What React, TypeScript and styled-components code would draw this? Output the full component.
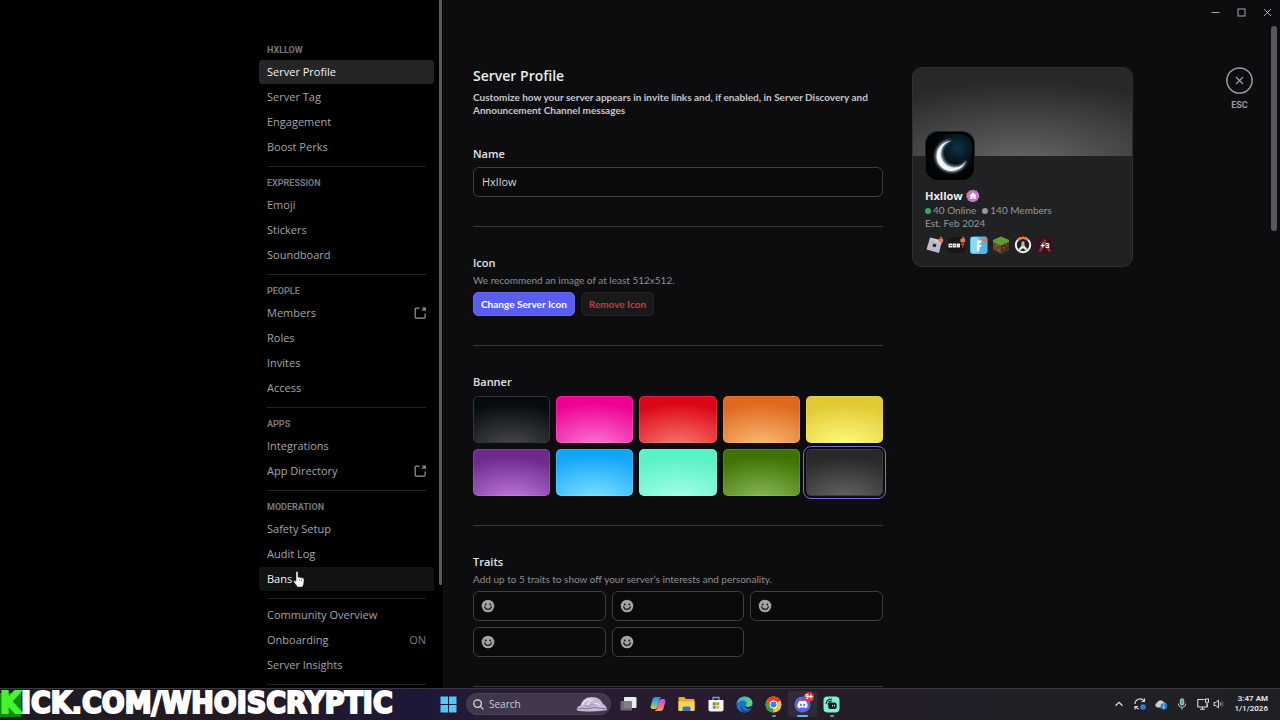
import React, { useState } from "react";
import styled, { createGlobalStyle, css } from "styled-components";
import { FaDiscord } from "react-icons/fa";

const uiFont = `"Open Sans", "Noto Sans", sans-serif`;
const smallFont = `Lato, Roboto, sans-serif`;

const GlobalStyle = createGlobalStyle`
  * { box-sizing: border-box; }
  body { margin: 0; background: #000; color: #dcdde0; font-family: ${uiFont}; }
  button, input { font: inherit; color: inherit; }
  h1, h2, h3, p, ul { margin: 0; padding: 0; }
`;

const Desktop = styled.div`
  position: relative;
  display: flex;
  flex-direction: column;
  height: 100vh;
  overflow: hidden;
`;

const Window = styled.div`
  flex: 1;
  min-height: 0;
  display: grid;
  grid-template-columns: minmax(200px, 443fr) minmax(0, 837fr);
  overflow: hidden;
`;

/* ---------- sidebar ---------- */

const Sidebar = styled.aside`
  display: flex;
  justify-content: flex-end;
  min-height: 0;
  padding-right: 1px;
  background: #000;
`;

const Nav = styled.nav`
  width: 175px;
  margin-right: 5px;
  padding-top: 38px;
`;

const Track = styled.div`
  width: 3px;
  height: 100%;
`;

const SideThumb = styled.div`
  height: 85%;
  border-radius: 0 0 2px 2px;
  background: #5b5b5e;
`;

const NavHeading = styled.h2`
  padding: 5px 8px 0;
  margin-bottom: 3px;
  font: 700 9px/14px Roboto, sans-serif;
  color: #77777d;
`;

const NavList = styled.ul`
  display: flex;
  flex-direction: column;
  gap: 1px;
  list-style: none;
`;

const NavRow = styled.li`
  position: relative;
`;

const NavLink = styled.a<{ $state?: "selected" | "hover" }>`
  display: flex;
  align-items: center;
  justify-content: space-between;
  height: 24px;
  padding: 0 8px;
  border-radius: 3px;
  font-size: 11px;
  font-weight: 500;
  line-height: 16px;
  color: #a4a4aa;
  text-decoration: none;
  ${p => p.$state === "selected" && css`background: #252527; color: #f2f2f4;`}
  ${p => p.$state === "hover" && css`background: #121213; color: #f2f2f4;`}
`;

const NavBadge = styled.span`
  color: #7c7c82;
`;

const NavRule = styled.hr`
  height: 1px;
  margin: 7px 8px 4px;
  border: 0;
  background: #232325;
`;

const Pointer = styled.svg`
  position: absolute;
  left: 34px;
  top: 4px;
  width: 12px;
  height: 17px;
`;

/* ---------- main pane ---------- */

const Pane = styled.main`
  display: flex;
  flex-direction: column;
  min-height: 0;
  background: #0d0d0f;
`;

const TitleBar = styled.div`
  display: flex;
  flex: none;
  justify-content: flex-end;
  height: 24px;
`;

const WindowButton = styled.button`
  display: flex;
  align-items: center;
  justify-content: center;
  width: 26px;
  padding: 0;
  border: 0;
  background: none;
  color: #a5a5aa;
`;

const PaneBody = styled.div`
  flex: 1;
  display: flex;
  min-height: 0;
  padding-right: 3px;
`;

const PageScroll = styled.div`
  width: 6px;
  padding-top: 2px;
`;

const PageThumb = styled.div`
  height: 31%;
  border-radius: 3px;
  background: #58585e;
`;

const Content = styled.div`
  flex: 1;
  display: flex;
  align-items: flex-start;
  min-width: 0;
  padding: 43px 18px 0 30px;
`;

const Form = styled.form`
  flex: 1;
  min-width: 0;
`;

const Title = styled.h1`
  font-size: 14px;
  font-weight: 600;
  line-height: 18px;
  color: #ebebee;
`;

const Intro = styled.p`
  margin: 6px 0 29px;
  font: 700 10px/13px ${smallFont};
  color: #c6c6ca;
`;

const Section = styled.section`
  padding-bottom: 29px;
  margin-bottom: 28px;
  border-bottom: 1px solid #39393c;
`;

const Label = styled.h3`
  font-size: 11px;
  font-weight: 600;
  line-height: 16px;
  color: #e2e2e5;
`;

const Hint = styled.p`
  margin: 2px 0 5px;
  font: 400 10px/14px ${smallFont};
  color: #8d8d93;
`;

const boxed = css`
  height: 30px;
  border: 1px solid #3e3e41;
  border-radius: 6px;
  background: #0a0a0a;
`;

const NameInput = styled.input`
  ${boxed}
  display: block;
  width: 100%;
  margin-top: 5px;
  padding: 0 8px 1px;
  font-size: 11px;
  color: #d8d8dc;
`;

const ButtonRow = styled.div`
  display: flex;
  gap: 6px;
`;

const Button = styled.button<{ $danger?: boolean }>`
  height: 24px;
  padding: 0 7px;
  border: 1px solid ${p => (p.$danger ? "#232325" : "#6468f2")};
  border-radius: 5px;
  background: ${p => (p.$danger ? "#19191b" : "#595ef0")};
  color: ${p => (p.$danger ? "#c43c45" : "#fff")};
  font: 700 10px/14px ${smallFont};
`;

const Swatches = styled.div`
  display: grid;
  grid-template-columns: repeat(5, 1fr);
  gap: 6px;
  margin-top: 6px;
`;

const Swatch = styled.input<{ $base: string; $glow: string; $edge?: string }>`
  appearance: none;
  width: 100%;
  height: 47px;
  margin: 0;
  border: 1px solid ${p => p.$edge ?? "rgba(255, 255, 255, 0.12)"};
  border-radius: 5px;
  background: radial-gradient(ellipse 95% 95% at 50% 110%, ${p => p.$glow}, ${p => p.$base}) border-box;
  &:checked {
    outline: 1px solid #7473d8;
    outline-offset: 2px;
  }
`;

const Traits = styled.div`
  display: grid;
  grid-template-columns: repeat(3, minmax(0, 1fr));
  gap: 6px;
`;

const Trait = styled.div`
  ${boxed}
  display: flex;
  align-items: center;
  gap: 6px;
  padding: 0 7px;
`;

const EmojiButton = styled.button`
  display: flex;
  padding: 0;
  border: 0;
  background: none;
`;

const TraitInput = styled.input`
  flex: 1;
  min-width: 0;
  padding: 0;
  border: 0;
  outline: 0;
  background: none;
  font-size: 11px;
`;

/* ---------- server card ---------- */

const Card = styled.article`
  flex: none;
  width: 221px;
  margin-left: 29px;
  overflow: hidden;
  border: 1px solid #2f3031;
  border-radius: 10px;
  background: #202123;
`;

const CardBanner = styled.div`
  height: 88px;
  background: radial-gradient(ellipse 95% 95% at 50% 110%, #676767, #282828);
`;

const CardBody = styled.div`
  padding: 0 12px 12px;
`;

const Avatar = styled.svg`
  display: block;
  width: 50px;
  height: 50px;
  margin-top: -25px;
`;

const CardName = styled.h2`
  display: flex;
  align-items: center;
  gap: 3px;
  margin-top: 7px;
  font-size: 11px;
  font-weight: 700;
  line-height: 16px;
  color: #ebebee;
`;

const CardLine = styled.p`
  display: flex;
  align-items: center;
  font: 400 10px/13px ${smallFont};
  color: #96979c;
`;

const Dot = styled.span<{ $color: string }>`
  width: 6px;
  height: 6px;
  margin-right: 2px;
  border-radius: 50%;
  background: ${p => p.$color};
  * + & { margin-left: 6px; }
`;

const Games = styled.div`
  display: flex;
  gap: 2px;
  margin-top: 6px;
  svg { display: block; width: 20px; height: 18px; }
`;

const CloseBox = styled.button`
  display: flex;
  flex-direction: column;
  align-items: center;
  gap: 5px;
  width: 27px;
  margin-left: 93px;
  padding: 0;
  border: 0;
  background: none;
  color: #9b9ba0;
  font: 700 9px/13px Roboto, sans-serif;
`;

/* ---------- taskbar ---------- */

const Taskbar = styled.footer`
  flex: none;
  display: grid;
  grid-template-columns: 1fr auto 1fr;
  align-items: center;
  height: 32px;
  padding-bottom: 1px;
  border-top: 1px solid #39363f;
  background: linear-gradient(90deg, #1d1b20 0%, #231a22 18%, #1d1838 33%, #2a1c37 40%, #281b2f 52%, #241d2a 66%, #202026 80%, #1f1f24 100%);
`;

const Apps = styled.div`
  grid-column: 2;
  display: flex;
  align-items: center;
  height: 100%;
  padding-left: 6px;
`;

const AppButton = styled.button<{ $start?: boolean; $active?: boolean }>`
  position: relative;
  display: flex;
  align-items: center;
  justify-content: center;
  width: ${p => (p.$start ? 17 : 29)}px;
  height: 26px;
  padding: 0;
  border: 0;
  border-radius: 3px;
  background: ${p => (p.$active ? "rgba(255, 255, 255, 0.06)" : "none")};
`;

const Running = styled.span<{ $wide?: boolean }>`
  position: absolute;
  bottom: 0;
  width: ${p => (p.$wide ? 11 : 4)}px;
  height: 2px;
  border-radius: 1px;
  background: ${p => (p.$wide ? "#62b8ee" : "#8d8a92")};
`;

const Count = styled.span`
  position: absolute;
  top: 1px;
  right: 3px;
  width: 10px;
  height: 10px;
  border-radius: 50%;
  background: #dd3442;
  color: #fff;
  font: 700 7px/10px Roboto, sans-serif;
  text-align: center;
`;

const SearchBox = styled.label`
  display: flex;
  align-items: center;
  width: 145px;
  height: 22px;
  margin: 0 3px 0 9px;
  padding: 0 2px 0 6px;
  border: 1px solid #4d4459;
  border-radius: 11px;
  background: #40374b;
`;

const SearchInput = styled.input`
  flex: 1;
  min-width: 0;
  padding: 0 0 0 5px;
  border: 0;
  outline: 0;
  background: none;
  font-size: 10px;
  line-height: 14px;
  &::placeholder { color: #cfcbd3; opacity: 1; }
`;

const Tray = styled.div`
  display: flex;
  align-items: center;
  justify-content: flex-end;
  gap: 9px;
  padding-right: 12px;
  color: #dcdce0;
  svg { display: block; }
`;

const TrayPair = styled.div`
  display: flex;
  gap: 4px;
`;

const Clock = styled.time`
  width: 34px;
  font: 600 8px/10px Roboto, sans-serif;
  text-align: right;
  white-space: nowrap;
  color: #e6e6ea;
`;

const StreamTag = styled.div`
  position: absolute;
  left: 0;
  bottom: 0;
  font: 700 30px/34px "DejaVu Sans Condensed", "DejaVu Sans", sans-serif;
  color: #fff;
  -webkit-text-stroke: 2px #fff;
  white-space: nowrap;
`;

const TagInitial = styled.span`
  background: linear-gradient(#0d8a12, #0d8a12) 0 8px / 100% 24px no-repeat;
  color: #45f42b;
  -webkit-text-stroke: 2px #45f42b;
`;

/* ---------- drawings ---------- */

const ExternalIcon = () => (
  <svg width="12" height="12" viewBox="0 0 12 12" fill="none" stroke="#97979d" strokeWidth="1.2">
    <path d="M5.500 1.200H2.200a1 1 0 0 0-1 1v7.900a1 1 0 0 0 1 1h7.900a1 1 0 0 0 1-1V6.600" />
    <path d="M8 1h3.200v3.200M11 1.200 8.300 3.900" />
  </svg>
);

const SmileIcon = () => (
  <svg width="14" height="14" viewBox="0 0 14 14">
    <circle cx="7" cy="7" r="6.300" fill="#a2a2a7" />
    <circle cx="4.700" cy="5.500" r="0.900" fill="#17171a" />
    <circle cx="9.300" cy="5.500" r="0.900" fill="#17171a" />
    <path d="M3.600 7.800c.5 1.600 1.800 2.600 3.400 2.600s2.900-1 3.400-2.600" fill="none" stroke="#17171a" strokeWidth="1.200" strokeLinecap="round" />
  </svg>
);

const MoonAvatar = () => (
  <Avatar viewBox="0 0 50 50" role="img" aria-label="Server icon">
    <defs>
      <radialGradient id="sky" cx="0.68" cy="0.32" r="0.5">
        <stop offset="0" stopColor="#0d3346" />
        <stop offset="1" stopColor="#020406" />
      </radialGradient>
      <filter id="glow" x="-30%" y="-30%" width="160%" height="160%"><feGaussianBlur stdDeviation="1.8" /></filter>
    </defs>
    <rect width="50" height="50" rx="13" fill="#202123" />
    <rect x="1" y="1" width="48" height="48" rx="12" fill="#000" />
    <rect x="3" y="3" width="44" height="44" rx="10" fill="url(#sky)" />
    <path d="M27 9A16 16 0 1 0 42 29A13.500 13.500 0 1 1 27 9z" fill="#c3ced6" filter="url(#glow)" />
    <path d="M26 10A15 15 0 1 0 41 29.500A13.500 13.500 0 1 1 26 10z" fill="#f2f5f7" />
  </Avatar>
);

const BoostBadge = () => (
  <svg width="14" height="14" viewBox="0 0 14 14">
    <path d="M7 .4 8.700 1.500l2-.1.800 1.800 1.700 1.100-.3 2 .6 1.900-1.400 1.400-.5 1.900-2 .5L8.200 13.300 7 12.800l-1.900.5-1.400-1.400-1.900-.5-.4-2L.2 8l.5-1.900-.3-1.900 1.800-1 .8-1.800 2 .1z" fill="#c678c8" />
    <path d="M7 3.400 3.400 6.800h1V10h2V8h1.200v2h2V6.800h1z" fill="#fff" />
  </svg>
);

const Flame = () => (
  <path d="M15.800 0c.5 1.600 2.500 2.200 2.500 4.300a2.500 2.500 0 0 1-5 0c0-1 .4-1.500.8-2 .2.500.4.800.8.800.6-.3.200-1.700.9-3.100z" fill="#dd7a58" />
);

const GameIcons = () => (
  <Games>
    <svg viewBox="0 0 20 18">
      <path d="M5 1.500 17 4.800 14 17 1.500 13.600z" fill="#b9bcc3" />
      <path d="M8.300 7.500 11.300 8.300 10.500 11.300 7.500 10.500z" fill="#202123" />
      <path d="M5 1.500 17 4.800 16 8.500z" fill="#e8eaee" opacity="0.6" />
      <Flame />
    </svg>
    <svg viewBox="0 0 20 18">
      <rect x="1" y="1" width="17" height="16" rx="3" fill="#161617" />
      <path d="M1.500 7.500h4v4h-4zM6 7.500h3.500v4H6zM10 7.500h3v4h-3z" fill="#e8e8ea" />
      <path d="M3 9h1.500v1H3zM7.300 9h1v1h-1z" fill="#333" />
      <path d="M13.800 7.500h4L16 11.500h-1.300L15.800 9h-2z" fill="#d5492f" />
      <Flame />
    </svg>
    <svg viewBox="0 0 20 18">
      <rect x="1" y="0.500" width="17.500" height="17.500" rx="3" fill="#4fb9ea" />
      <rect x="2" y="1" width="8" height="16" rx="2" fill="#8ed9f8" />
      <path d="M8 4.500h4.500v2.200h-2v2h1.800v2.200h-1.800V15H8z" fill="#fff" />
      <Flame />
    </svg>
    <svg viewBox="0 0 20 18">
      <path d="M10 .5 18 4v9.500L10 18l-8-4.500V4z" fill="#6d452d" />
      <path d="M10 8 18 4v9.500L10 18z" fill="#4f301f" />
      <path d="M10 .5 18 4v2L10 9.500 2 6V4z" fill="#5c9c36" />
      <path d="M5 9h1.500v1.500H5zM12 11h1.500v1.500H12zM7 13h1.500v1.500H7zM15 8.500h1V10h-1z" fill="#94633f" />
    </svg>
    <svg viewBox="0 0 20 18">
      <circle cx="10" cy="9" r="7.200" fill="#202123" stroke="#f2f2f3" strokeWidth="2" />
      <path d="M4.900 3.900A7.200 7.200 0 0 1 15.100 3.900" fill="none" stroke="#ee7b35" strokeWidth="2.200" />
      <path d="M9.300 5.500 8.800 10 5.800 13l1.300 1.200L10 11.800l2.900 2.400 1.300-1.200-3-3-.5-4.500v4.300L10 10.500l-.7-.7z" fill="#f2f2f3" stroke="#f2f2f3" strokeWidth="0.600" />
    </svg>
    <svg viewBox="0 0 20 18">
      <rect x="1" y="0.500" width="17.500" height="17" rx="3" fill="#3c1118" />
      <path d="m9.500 2.500-6 13h3l3.200-7.500 3.500 7.500h3z" fill="#71434a" />
      <text x="10" y="12" textAnchor="middle" fontFamily="Roboto, sans-serif" fontWeight="700" fontSize="8" fill="#fff">+3</text>
    </svg>
  </Games>
);

const WindowsLogo = () => (
  <svg width="17" height="17" viewBox="0 0 17 17">
    <path d="M.5.500H8V8H.5zM9 .5h7.500V8H9zM.5 9H8v7.500H.5zM9 9h7.500v7.500H9z" fill="#58c6f4" />
  </svg>
);

const Shell = () => (
  <svg width="32" height="16" viewBox="0 0 32 16">
    <path d="M1 14.500c-.8-3 1.500-4.500 3.500-5C6 4 10.500.8 16 1c5.500-.2 9.500 2.800 11 7 2.500 1 4.200 3.500 4 6-5 1.600-24 2-30 .5z" fill="#c3b8d6" />
    <path d="M6 9C8 5 11 3 14 3M12 9c0-3 2-5 5-5M18 8c3-1 5 0 6 2" fill="none" stroke="#e6dff0" strokeWidth="1.500" />
    <path d="M9 9c1 2 4 2 6 0s4 0 5 1" fill="none" stroke="#9b8fb5" strokeWidth="1" />
    <path d="M1.500 13c5-2 8 1 13-.8s9 1 16 .3" fill="none" stroke="#80749c" />
  </svg>
);

const TaskViewIcon = () => (
  <svg width="17" height="16" viewBox="0 0 17 16">
    <rect x="4" y="1" width="12.500" height="11" rx="1" fill="#ecebee" />
    <rect x="0.500" y="5" width="11.500" height="9.500" rx="1" fill="#77747a" fillOpacity="0.900" />
  </svg>
);

const CopilotIcon = () => (
  <svg width="16" height="16" viewBox="0 0 16 16">
    <defs>
      <linearGradient id="cpA" x1="0" y1="0" x2="0" y2="1"><stop stopColor="#2b8df0" /><stop offset="0.600" stopColor="#55c1a0" /><stop offset="1" stopColor="#f3c33a" /></linearGradient>
      <linearGradient id="cpB" x1="0" y1="0" x2="0" y2="1"><stop stopColor="#a35ff0" /><stop offset="0.500" stopColor="#f0609a" /><stop offset="1" stopColor="#f79a50" /></linearGradient>
    </defs>
    <path d="M10.500 1H5.500C3.500 1 2.900 2.500 2.300 4.500L.8 9.500C.2 11.700 1 13 2.800 13h2c1.300 0 2-.8 2.500-2.500L9 4C9.400 2.500 10 1.600 11.500 1.600z" fill="url(#cpA)" />
    <path d="M5.500 15h5c2 0 2.600-1.500 3.200-3.500l1.500-5C15.800 4.300 15 3 13.200 3h-2c-1.300 0-2 .8-2.500 2.500L7 12c-.4 1.500-1 2.400-2.500 2.400z" fill="url(#cpB)" />
  </svg>
);

const FolderIcon = () => (
  <svg width="17" height="16" viewBox="0 0 17 16">
    <path d="M.5 2A1 1 0 0 1 1.500 1h4.700l1.800 2h7.500a1 1 0 0 1 1 1v10.500H.5z" fill="#e9ad28" />
    <path d="M.5 5.500h16V14a1 1 0 0 1-1 1h-14a1 1 0 0 1-1-1z" fill="#fbd257" />
    <path d="M4.500 15v-3a1.500 1.500 0 0 1 1.500-1.500h5A1.500 1.500 0 0 1 12.500 12v3z" fill="#2a78c4" />
  </svg>
);

const StoreIcon = () => (
  <svg width="16" height="16" viewBox="0 0 16 16">
    <path d="M5 4V1.500h6V4" fill="none" stroke="#46b6ee" strokeWidth="1.300" />
    <path d="M.5 4h15v9.500a2 2 0 0 1-2 2h-11a2 2 0 0 1-2-2z" fill="#f3f2f5" />
    <path d="M4.800 6.300h2.900v2.900H4.800z" fill="#e8542f" />
    <path d="M8.300 6.300h2.900v2.900H8.300z" fill="#7db728" />
    <path d="M4.800 9.800h2.900v2.900H4.800z" fill="#2a9de0" />
    <path d="M8.300 9.800h2.900v2.900H8.300z" fill="#f6b81b" />
  </svg>
);

const EdgeIcon = () => (
  <svg width="17" height="17" viewBox="0 0 17 17">
    <defs>
      <linearGradient id="edTop" x1="0" y1="0" x2="1" y2="0.500"><stop stopColor="#2fa8e0" /><stop offset="1" stopColor="#62d66b" /></linearGradient>
    </defs>
    <circle cx="8.500" cy="8.500" r="8" fill="#1a74c8" />
    <path d="M.6 8.300C1 3.500 4.400.5 8.600.5c4.500 0 7.900 3 7.900 6.500 0 2.500-1.900 4-4.200 4-1.800 0-2.600-.7-2.600-1.300 0-.7.900-1 .9-2.200 0-1.600-1.700-2.900-4-2.900-2.700 0-4.900 1.500-6 3.700z" fill="url(#edTop)" />
    <path d="M6 8.500c-.8 4 2 6.500 5.300 6.300 1.700-.1 3-.7 3.800-1.500-1.500 2-3.800 3.200-6.600 3.200C4.800 16.300 3.500 11 6 8.500z" fill="#124f9c" />
    <path d="M9.800 9.700c0 .6.800 1.300 2.500 1.300 1.600 0 3-.6 3.700-1.700l-.6 3c-2.500 1.300-7 .5-5.600-2.600z" fill="#241d2c" />
  </svg>
);

const ChromeIcon = () => (
  <svg width="17" height="17" viewBox="0 0 17 17">
    <circle cx="8.500" cy="8.500" r="8" fill="#f6c626" />
    <path d="M8.500 8.500 1.600 4.500A8 8 0 0 1 15.400 4.500z" fill="#e2402f" />
    <path d="M8.500.5a8 8 0 0 1 6.900 4H8.500zM1.600 4.500 5 10.500 8.500 8.500z" fill="#e2402f" />
    <path d="M1.600 4.500 5 10.500 8.500 12.500 8.200 16.500A8 8 0 0 1 1.600 4.500z" fill="#2da14c" />
    <circle cx="8.500" cy="8.500" r="3.900" fill="#fff" />
    <circle cx="8.500" cy="8.500" r="3" fill="#3f7de8" />
  </svg>
);

const DiscordTile = () => (
  <svg width="17" height="17" viewBox="0 0 17 17">
    <circle cx="8.500" cy="8.500" r="8" fill="#5765e6" />
    <FaDiscord x="3" y="3" size={11} color="#fff" />
  </svg>
);

const CamIcon = () => (
  <svg width="17" height="17" viewBox="0 0 17 17">
    <rect x="0.500" y="0.500" width="16" height="16" rx="4" fill="#7ff0cb" />
    <path d="M3 8C3.500 5 6 3 9 3M5 8.500C5.300 6.500 7 5 9 5" fill="none" stroke="#123" strokeWidth="1.100" />
    <rect x="5.200" y="6.500" width="8.500" height="6.500" rx="2" fill="#0c1c1a" />
    <path d="M9.500 8.800v1.600M11.500 8.800v1.600" stroke="#7ff0cb" />
  </svg>
);

const SearchGlyph = () => (
  <svg width="11" height="11" viewBox="0 0 11 11" fill="none" stroke="#dedbe2" strokeWidth="1.300">
    <circle cx="4.600" cy="4.600" r="3.800" />
    <path d="m7.400 7.400 3 3" />
  </svg>
);

/* ---------- data ---------- */

type Item = { name: string; external?: boolean; badge?: string };
const groups: { heading?: string; items: Item[] }[] = [
  { heading: "HXLLOW", items: [{ name: "Server Profile" }, { name: "Server Tag" }, { name: "Engagement" }, { name: "Boost Perks" }] },
  { heading: "EXPRESSION", items: [{ name: "Emoji" }, { name: "Stickers" }, { name: "Soundboard" }] },
  { heading: "PEOPLE", items: [{ name: "Members", external: true }, { name: "Roles" }, { name: "Invites" }, { name: "Access" }] },
  { heading: "APPS", items: [{ name: "Integrations" }, { name: "App Directory", external: true }] },
  { heading: "MODERATION", items: [{ name: "Safety Setup" }, { name: "Audit Log" }, { name: "Bans" }] },
  { items: [{ name: "Community Overview" }, { name: "Onboarding", badge: "ON" }, { name: "Server Insights" }] },
];

const banners = [
  { name: "Black", base: "#060b0e", glow: "#4a4c50", edge: "#2f3638" },
  { name: "Pink", base: "#ee0293", glow: "#fb7ad8" },
  { name: "Red", base: "#dc0619", glow: "#f97d70" },
  { name: "Orange", base: "#e0681d", glow: "#fac07a" },
  { name: "Yellow", base: "#e2c833", glow: "#ffff84" },
  { name: "Purple", base: "#6c2a8c", glow: "#c27ae2" },
  { name: "Blue", base: "#15a6fa", glow: "#82e4ff" },
  { name: "Mint", base: "#5af2c8", glow: "#a8ffe8" },
  { name: "Green", base: "#3e7302", glow: "#8dbb58" },
  { name: "Grey", base: "#282828", glow: "#676767", edge: "#3b3b3d" },
];

const apps: { name: string; icon: React.ReactNode; running?: boolean; active?: boolean; count?: string }[] = [
  { name: "Task view", icon: <TaskViewIcon /> },
  { name: "Copilot", icon: <CopilotIcon /> },
  { name: "File Explorer", icon: <FolderIcon /> },
  { name: "Store", icon: <StoreIcon /> },
  { name: "Edge", icon: <EdgeIcon /> },
  { name: "Chrome", icon: <ChromeIcon />, running: true },
  { name: "Discord", icon: <DiscordTile />, running: true, active: true, count: "9+" },
  { name: "Streamlabs", icon: <CamIcon />, running: true },
];

/* ---------- page ---------- */

function SettingsNav() {
  return (
    <Sidebar>
      <Nav aria-label="Server settings">
        {groups.map((g, i) => (
          <React.Fragment key={i}>
            {g.heading && <NavHeading>{g.heading}</NavHeading>}
            <NavList>
              {g.items.map(it => (
                <NavRow key={it.name}>
                  <NavLink href="#" $state={it.name === "Server Profile" ? "selected" : it.name === "Bans" ? "hover" : undefined}>
                    {it.name}
                    {it.external && <ExternalIcon />}
                    {it.badge && <NavBadge>{it.badge}</NavBadge>}
                  </NavLink>
                  {it.name === "Bans" && (
                    <Pointer viewBox="0 0 12 17">
                      <path d="M3 1.500c0-1.300 2-1.300 2 0V6l4.500 1c1.200.3 1.700 1 1.600 2.200L10.600 13 9.500 16H4.500L1 11.200C.3 10 1.300 9.200 2.200 9.800L3 10.500z" fill="#fff" stroke="#222" strokeWidth="0.500" />
                      <path d="M6.500 8v2M8.500 8.300v2" stroke="#555" strokeWidth="0.600" />
                    </Pointer>
                  )}
                </NavRow>
              ))}
            </NavList>
            <NavRule />
          </React.Fragment>
        ))}
      </Nav>
      <Track><SideThumb /></Track>
    </Sidebar>
  );
}

function ServerCard() {
  return (
    <Card>
      <CardBanner />
      <CardBody>
        <MoonAvatar />
        <CardName>Hxllow <BoostBadge /></CardName>
        <CardLine>
          <Dot $color="#45a366" /><span>40 Online</span>
          <Dot $color="#96979c" /><span>140 Members</span>
        </CardLine>
        <CardLine>Est. Feb 2024</CardLine>
        <GameIcons />
      </CardBody>
    </Card>
  );
}

export default function App() {
  const [name, setName] = useState("Hxllow");
  const [banner, setBanner] = useState("Grey");
  return (
    <Desktop>
      <GlobalStyle />
      <Window>
        <SettingsNav />
        <Pane>
          <TitleBar>
            <WindowButton aria-label="Minimize"><svg width="9" height="9" viewBox="0 0 9 9"><path d="M.5 4.500h8" stroke="currentColor" /></svg></WindowButton>
            <WindowButton aria-label="Maximize"><svg width="9" height="9" viewBox="0 0 9 9"><rect x="1" y="1" width="7" height="7" fill="none" stroke="currentColor" /></svg></WindowButton>
            <WindowButton aria-label="Close"><svg width="9" height="9" viewBox="0 0 9 9"><path d="m1 1 7 7M8 1 1 8" stroke="currentColor" /></svg></WindowButton>
          </TitleBar>
          <PaneBody>
            <Content>
              <Form>
                <Title>Server Profile</Title>
                <Intro>Customize how your server appears in invite links and, if enabled, in Server Discovery and Announcement Channel messages</Intro>
                <Section>
                  <Label><label htmlFor="name">Name</label></Label>
                  <NameInput id="name" value={name} onChange={e => setName(e.target.value)} />
                </Section>
                <Section>
                  <Label>Icon</Label>
                  <Hint>We recommend an image of at least 512x512.</Hint>
                  <ButtonRow>
                    <Button type="button">Change Server Icon</Button>
                    <Button type="button" $danger>Remove Icon</Button>
                  </ButtonRow>
                </Section>
                <Section>
                  <Label>Banner</Label>
                  <Swatches role="radiogroup" aria-label="Banner">
                    {banners.map(b => (
                      <Swatch key={b.name} type="radio" name="banner" aria-label={b.name} $base={b.base} $glow={b.glow} $edge={b.edge}
                        checked={banner === b.name} onChange={() => setBanner(b.name)} />
                    ))}
                  </Swatches>
                </Section>
                <Section>
                  <Label>Traits</Label>
                  <Hint>Add up to 5 traits to show off your server’s interests and personality.</Hint>
                  <Traits>
                    {[1, 2, 3, 4, 5].map(n => (
                      <Trait key={n}>
                        <EmojiButton type="button" aria-label={`Emoji for trait ${n}`}><SmileIcon /></EmojiButton>
                        <TraitInput aria-label={`Trait ${n}`} />
                      </Trait>
                    ))}
                  </Traits>
                </Section>
              </Form>
              <ServerCard />
              <CloseBox>
                <svg width="27" height="27" viewBox="0 0 27 27" fill="none" stroke="currentColor">
                  <circle cx="13.500" cy="13.500" r="12.600" strokeWidth="1.500" />
                  <path d="m10 10 7 7M17 10l-7 7" strokeWidth="1.300" />
                </svg>
                ESC
              </CloseBox>
            </Content>
            <PageScroll><PageThumb /></PageScroll>
          </PaneBody>
        </Pane>
      </Window>
      <Taskbar>
        <Apps>
          <AppButton $start aria-label="Start"><WindowsLogo /></AppButton>
          <SearchBox>
            <SearchGlyph />
            <SearchInput placeholder="Search" aria-label="Search" />
            <Shell />
          </SearchBox>
          {apps.map(a => (
            <AppButton key={a.name} aria-label={a.name} $active={a.active}>
              {a.icon}
              {a.running && <Running $wide={a.active} />}
              {a.count && <Count>{a.count}</Count>}
            </AppButton>
          ))}
        </Apps>
        <Tray>
          <svg width="12" height="12" viewBox="0 0 12 12" fill="none" stroke="currentColor" strokeWidth="1.300"><path d="m2.500 7.800 3.500-3.500 3.500 3.500" /></svg>
          <svg width="12" height="12" viewBox="0 0 12 12" fill="none" stroke="currentColor" strokeWidth="1.200">
            <path d="M1 6a5 5 0 0 1 9-3M10.500.5v3h-3M5 11a5 5 0 0 1-3.500-2.500M1 11.500v-3h3" />
            <circle cx="9" cy="9" r="2.800" fill="#2c7cd0" stroke="none" />
          </svg>
          <svg width="12" height="12" viewBox="0 0 12 12">
            <path d="M2.500 9.500A2.400 2.400 0 0 1 2 4.800a3.700 3.700 0 0 1 7-.3c1.500.2 2.500 1.200 2.500 2.500S10.500 9.500 9 9.500z" fill="#c9ccd2" />
            <circle cx="8.800" cy="8.500" r="3.200" fill="#1f7fcb" />
            <path d="M8.800 8v2.300M8.800 6.500v.8" stroke="#fff" />
          </svg>
          <svg width="12" height="12" viewBox="0 0 12 12" fill="none" stroke="#9cc9c6" strokeWidth="1.100">
            <rect x="4.300" y="0.800" width="3.400" height="6.200" rx="1.700" fill="#5aa7a4" />
            <path d="M2.300 5.500a3.700 3.700 0 0 0 7.400 0M6 9.200v2.300" />
          </svg>
          <TrayPair>
            <svg width="12" height="12" viewBox="0 0 12 12" fill="none" stroke="currentColor" strokeWidth="1.100">
              <path d="M7.500 1.500H.8V9h9.400V6.500M3 11.300h5M5.500 9v2" />
              <path d="M8.500 1h3v2.500a1.500 1.500 0 0 1-3 0zM10 5v3" />
            </svg>
            <svg width="12" height="12" viewBox="0 0 12 12" fill="none" stroke="currentColor" strokeWidth="1">
              <path d="M1 4.500h1.800L5.500 2v8L2.800 7.500H1zM7.300 4.300a2.500 2.500 0 0 1 0 3.400" />
              <path d="M8.900 2.800a4.600 4.600 0 0 1 0 6.400" stroke="#66666b" />
            </svg>
          </TrayPair>
          <Clock>3:47 AM<br />1/1/2026</Clock>
        </Tray>
      </Taskbar>
      <StreamTag><TagInitial>K</TagInitial>ICK.COM/WHOISCRYPTIC</StreamTag>
    </Desktop>
  );
}
